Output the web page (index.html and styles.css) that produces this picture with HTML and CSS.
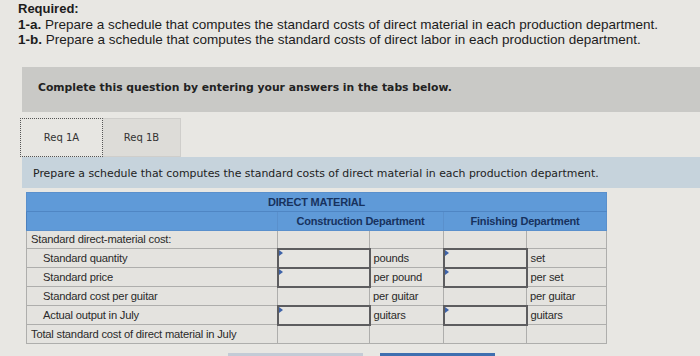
FILE: index.html
```html
<!DOCTYPE html>
<html lang="en">
<head>
<meta charset="utf-8">
<title>Required: standard costs</title>
<link rel="stylesheet" href="styles.css">
</head>
<body>
  <div class="required">
    <div class="required-title">Required:</div>
    <div><b>1-a.</b> Prepare a schedule that computes the standard costs of direct material in each production department.</div>
    <div><b>1-b.</b> Prepare a schedule that computes the standard costs of direct labor in each production department.</div>
  </div>

  <div class="instructions">Complete this question by entering your answers in the tabs below.</div>

  <div class="tabs">
    <div class="tab tab-active">Req 1A</div>
    <div class="tab">Req 1B</div>
  </div>

  <div class="prompt">Prepare a schedule that computes the standard costs of direct material in each production department.</div>

  <table class="schedule">
    <colgroup>
      <col class="col-label">
      <col class="col-input-a">
      <col class="col-unit-a">
      <col class="col-input-b">
      <col class="col-unit-b">
    </colgroup>
    <thead>
      <tr class="head-top"><th colspan="5">DIRECT MATERIAL</th></tr>
      <tr class="head-dept">
        <th></th>
        <th colspan="2">Construction Department</th>
        <th colspan="2">Finishing Department</th>
      </tr>
    </thead>
    <tbody>
      <tr>
        <td class="label">Standard direct-material cost:</td>
        <td></td><td></td><td></td><td></td>
      </tr>
      <tr>
        <td class="label indent">Standard quantity</td>
        <td class="entry"><span class="flag"></span></td><td class="unit">pounds</td>
        <td class="entry"><span class="flag"></span></td><td class="unit">set</td>
      </tr>
      <tr>
        <td class="label indent">Standard price</td>
        <td class="entry"><span class="flag"></span></td><td class="unit">per pound</td>
        <td class="entry"><span class="flag"></span></td><td class="unit">per set</td>
      </tr>
      <tr>
        <td class="label indent">Standard cost per guitar</td>
        <td></td><td class="unit">per guitar</td>
        <td></td><td class="unit">per guitar</td>
      </tr>
      <tr>
        <td class="label indent">Actual output in July</td>
        <td class="entry"><span class="flag"></span></td><td class="unit">guitars</td>
        <td class="entry"><span class="flag"></span></td><td class="unit">guitars</td>
      </tr>
      <tr>
        <td class="label">Total standard cost of direct material in July</td>
        <td></td><td></td><td></td><td></td>
      </tr>
    </tbody>
  </table>

  <div class="nav">
    <div class="nav-btn nav-prev"></div>
    <div class="nav-btn nav-next"></div>
  </div>
</body>
</html>
```

FILE: styles.css
```css
html, body {
  margin: 0;
  padding: 0;
}

body {
  width: 700px;
  height: 356px;
  overflow: hidden;
  background: #e8e7e3;
  color: #1c1c1c;
  font-family: "Liberation Sans", Arial, sans-serif;
}

/* Assignment heading */
.required {
  padding: 1px 0 0 18px;
  font-size: 13.5px;
  line-height: 15.5px;
}

.required-title {
  font-weight: bold;
  font-size: 13px;
}

/* Grey instruction band */
.instructions {
  margin: 19px 0 0 22px;
  height: 45px;
  padding-left: 16px;
  box-sizing: border-box;
  display: flex;
  align-items: center;
  padding-bottom: 4px;
  background: #c9c9c6;
  font-family: "DejaVu Sans", Verdana, sans-serif;
  font-weight: bold;
  font-size: 10.8px;
  color: #222;
}

/* Tab strip */
.tabs {
  display: flex;
  margin: 6px 0 0 20px;
  height: 39px;
}

.tab {
  display: flex;
  align-items: center;
  justify-content: center;
  box-sizing: border-box;
  height: 39px;
  font-family: "DejaVu Sans", Verdana, sans-serif;
  font-size: 10px;
  color: #333;
}

.tab-active {
  width: 83px;
  border: 1px dotted #555;
  background: #e7e6e2;
}

.tab:not(.tab-active) {
  width: 78px;
  border: 1px solid #cfcecb;
  border-left: none;
  background: #dddcd8;
}

/* Blue prompt band */
.prompt {
  margin-left: 22px;
  height: 31px;
  padding-left: 11px;
  display: flex;
  align-items: center;
  padding-top: 2px;
  box-sizing: border-box;
  background: #c6d3dc;
  font-family: "DejaVu Sans", Verdana, sans-serif;
  font-size: 10.9px;
  color: #222;
}

/* Schedule table */
.schedule {
  margin: 4px 0 0 26px;
  width: 580px;
  border-collapse: collapse;
  table-layout: fixed;
  font-family: "Liberation Sans", Arial, sans-serif;
  font-size: 11.2px;
  letter-spacing: -0.2px;
}

.col-label { width: 251px; }
.col-input-a { width: 92px; }
.col-unit-a { width: 74px; }
.col-input-b { width: 83px; }
.col-unit-b { width: 80px; }

.schedule th {
  background: #5f9ad8;
  color: #17325e;
  font-weight: bold;
  font-size: 11px;
  text-align: center;
  padding: 0;
}

.head-top th {
  height: 18px;
  border: 1px solid #5a90cc;
  border-bottom: 1px solid #4f86c4;
}

.head-dept th {
  height: 18px;
  border: 1px solid #5a90cc;
  border-left: 1px solid #4b80bd;
}

.schedule td {
  height: 17px;
  padding: 0 2px;
  border: 1px solid #aeaeac;
  background: #e4e3df;
  color: #2a2a2a;
  white-space: nowrap;
  overflow: hidden;
}

.schedule td.label {
  padding-left: 4px;
}

.schedule td.indent {
  padding-left: 16px;
}

.schedule td.unit {
  padding-left: 3px;
}

/* Entry cells: darker framed box with a small blue marker */
.schedule td.entry {
  position: relative;
  border: 2px solid #5d5d5f;
  background: #e6e5e1;
}

.flag {
  position: absolute;
  left: 0;
  top: 0;
  width: 0;
  height: 0;
  border-top: 3px solid transparent;
  border-bottom: 3px solid transparent;
  border-left: 4px solid #3f63a8;
}

/* Navigation buttons, mostly below the fold */
.nav {
  display: flex;
  margin: 9px 0 0 228px;
  gap: 17px;
}

.nav-btn {
  height: 20px;
}

.nav-prev {
  width: 135px;
  background: #c3cbd6;
}

.nav-next {
  width: 115px;
  background: #3f6fb0;
}
```
